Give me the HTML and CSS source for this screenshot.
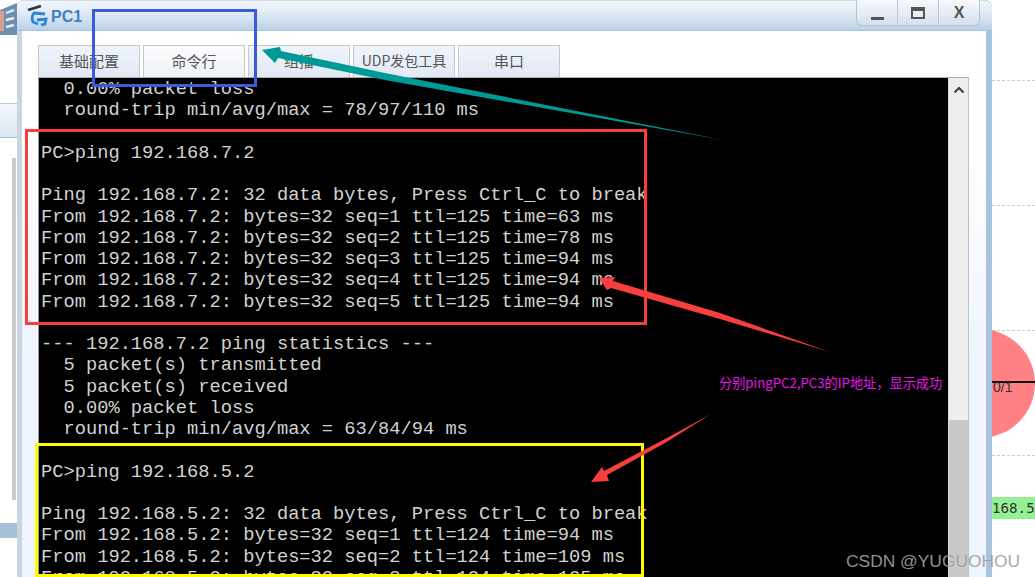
FILE: index.html
```html
<!DOCTYPE html>
<html lang="zh-CN">
<head>
<meta charset="utf-8">
<title>PC1</title>
<link rel="stylesheet" href="styles.css">
</head>
<body>
<div class="stage">
  <aside class="side-left">
    <div class="left-top">
      <svg class="left-icon" viewBox="0 0 17 33"><path d="M0 8 L17 1 V33 L0 33Z" fill="#6f8fb0"/><path d="M0 9h4v20H0z" fill="#d9a08e"/><path d="M6 11l8-3M6 18l8-2M6 25l8-2" stroke="#e8eef5" stroke-width="2.4"/></svg>
    </div>
    <div class="left-head"></div>
    <div class="left-body"><div class="left-scroll"></div></div>
    <div class="left-bar"></div>
  </aside>

  <main class="window">
    <header class="titlebar">
      <svg class="app-icon" viewBox="0 0 22 24"><path d="M1 6 L14 2" stroke="#333" stroke-width="2.8" fill="none"/><path d="M18 10 L7 9 Q4 13 6 18 L11 20" stroke="#2a86d8" stroke-width="2.800" fill="none"/><path d="M10 16 L19 15 L18 20 L14 21" stroke="#2a86d8" stroke-width="2.800" fill="none"/></svg>
      <span class="title-text">PC1</span>
      <div class="controls">
        <div class="ctl"><span class="ctl-min"></span></div>
        <div class="ctl"><span class="ctl-max"></span></div>
        <div class="ctl ctl-x">X</div>
      </div>
    </header>
    <section class="content">
      <nav class="tabs">
        <div class="tab">基础配置</div>
        <div class="tab tab-active">命令行</div>
        <div class="tab">组播</div>
        <div class="tab tab-udp">UDP发包工具</div>
        <div class="tab">串口</div>
      </nav>
      <div class="console">
<pre class="terminal">  0.00% packet loss
  round-trip min/avg/max = 78/97/110 ms

PC&gt;ping 192.168.7.2

Ping 192.168.7.2: 32 data bytes, Press Ctrl_C to break
From 192.168.7.2: bytes=32 seq=1 ttl=125 time=63 ms
From 192.168.7.2: bytes=32 seq=2 ttl=125 time=78 ms
From 192.168.7.2: bytes=32 seq=3 ttl=125 time=94 ms
From 192.168.7.2: bytes=32 seq=4 ttl=125 time=94 ms
From 192.168.7.2: bytes=32 seq=5 ttl=125 time=94 ms

--- 192.168.7.2 ping statistics ---
  5 packet(s) transmitted
  5 packet(s) received
  0.00% packet loss
  round-trip min/avg/max = 63/84/94 ms

PC&gt;ping 192.168.5.2

Ping 192.168.5.2: 32 data bytes, Press Ctrl_C to break
From 192.168.5.2: bytes=32 seq=1 ttl=124 time=94 ms
From 192.168.5.2: bytes=32 seq=2 ttl=124 time=109 ms
From 192.168.5.2: bytes=32 seq=3 ttl=124 time=125 ms</pre>
        <div class="scrollbar">
          <svg class="scroll-up" viewBox="0 0 12 8"><path d="M1.5 6.5 L6 2 L10.500 6.500" stroke="#444" stroke-width="2.200" fill="none"/></svg>
          <div class="scroll-thumb"></div>
        </div>
      </div>
    </section>
  </main>

  <aside class="side-right">
    <div class="guide guide-1"></div>
    <div class="guide guide-2"></div>
    <div class="guide guide-3"></div>
    <div class="guide guide-4"></div>
    <div class="node"></div>
    <div class="link"></div>
    <div class="port">0/1</div>
    <div class="ip-label">168.5</div>
  </aside>

  <div class="mark mark-blue"></div>
  <div class="mark mark-red"></div>
  <div class="mark mark-yellow"></div>
  <svg class="arrows" viewBox="0 0 1035 577">
    <polygon fill="#009a96" points="262,50 280,47 281,51 385,73 723,140 385,80 278,58 275,63"/>
    <polygon fill="#f93e3e" points="599,278 615,277 613,281 720,313 830,352 720,319 611,288 607,290"/>
    <polygon fill="#f93e3e" points="591,482 602,467 604,471 665,439 711,414 665,443 607,475 609,481"/>
  </svg>
  <div class="note">分别pingPC2,PC3的IP地址，显示成功</div>
  <div class="watermark">CSDN @YUGUOHOU</div>
</div>
</body>
</html>
```
FILE: styles.css
```css
* { box-sizing: border-box; }
html, body { margin: 0; padding: 0; background: #fff; }
body { width: 1035px; height: 577px; overflow: hidden; }
.stage {
  position: relative;
  display: flex;
  width: 1035px;
  height: 577px;
  overflow: hidden;
  background: #fff;
}

/* left background app */
.side-left { width: 17px; height: 577px; display: flex; flex-direction: column; flex: none; }
.left-top { height: 103px; background: #fff; }
.left-icon { display: block; width: 17px; height: 33px; margin-top: 2px; }
.left-head {
  height: 35px;
  border-top: 1px solid #c4ccd6;
  border-bottom: 1px solid #a9c0d6;
  background: linear-gradient(#f4f7fb, #dbe6f1);
}
.left-body { height: 385px; padding: 20px 0 23px 12px; background: #fff; }
.left-scroll { width: 4px; height: 100%; background: #c9c9c9; }
.left-bar { height: 15px; background: #a6c0da; }

/* simulator window */
.window {
  width: 975px;
  height: 577px;
  flex: none;
  display: flex;
  flex-direction: column;
  border-radius: 7px 7px 0 0;
  background: linear-gradient(90deg, #c9d6e2 0, #9dbcd7 40%, #a8c4dd 100%);
  padding: 0 6px 0 5px;
}
.titlebar {
  height: 31px;
  flex: none;
  margin: 0 -6px 0 -5px;
  padding-left: 10px;
  display: flex;
  align-items: center;
  border-top: 1px solid #d6dbe2;
  border-radius: 7px 7px 0 0;
  border-bottom: 1px solid #a9c3da;
  background: linear-gradient(#f1f5fb, #e6edf7 35%, #b9d1e8);
}
.app-icon { width: 22px; height: 24px; flex: none; }
.title-text {
  margin-left: 2px;
  padding-top: 2px;
  font: 700 16px "Liberation Sans", sans-serif;
  color: #3f7fbe;
}
.controls {
  margin-left: auto;
  margin-right: 12px;
  margin-top: -5px;
  width: 124px;
  height: 26px;
  display: flex;
  border: 1px solid #b9c4cf;
  border-top: none;
  border-radius: 0 0 6px 6px;
  background: linear-gradient(#f7f9fc, #d5e1ee);
}
.ctl {
  flex: 1;
  display: flex;
  align-items: center;
  justify-content: center;
  border-right: 1px solid #bcc8d4;
  font: 700 16px "Liberation Sans", sans-serif;
  color: #555;
}
.ctl:last-child { border-right: none; }
.ctl-min { width: 13px; height: 3px; background: #555; margin-top: 12px; }
.ctl-max { width: 14px; height: 12px; border: 2px solid #555; border-top-width: 4px; background: #e8eef6; }

.content {
  flex: 1;
  min-height: 0;
  padding: 14px 17px 0 16px;
  display: flex;
  flex-direction: column;
  background: linear-gradient(#fff, #fff 20%, #eff4fe 60%);
}
.tabs { display: flex; gap: 3px; height: 32px; flex: none; }
.tab {
  width: 102px;
  display: flex;
  align-items: center;
  justify-content: center;
  padding-bottom: 3px;
  border: 1px solid #c3c8ce;
  border-bottom: none;
  background: linear-gradient(#f0f4fb, #e1e9f5);
  font: 15px "Noto Sans CJK SC", sans-serif;
  color: #555;
}
.tab-active { background: linear-gradient(#fbfcfe, #eef1f6); }
.tab-udp { white-space: nowrap; font-size: 14px; }

.console {
  flex: 1;
  min-height: 0;
  display: flex;
  border-top: 1px solid #aaa;
  border-right: 1px solid #c0c0c0;
  border-left: 1px solid #999;
}
.terminal {
  flex: 1;
  margin: 0;
  padding: 1px 0 0 2px;
  background: #000;
  color: #d2d2d2;
  font: 18.73px/21.25px "Liberation Mono", monospace;
  overflow: hidden;
  white-space: pre;
}
.scrollbar {
  position: relative;
  width: 20px;
  flex: none;
  background: #eee;
  display: flex;
  flex-direction: column;
  justify-content: flex-end;
  border-left: 1px solid #ddd;
}
.scroll-up { position: absolute; top: 8px; left: 4px; width: 12px; height: 8px; }
.scroll-thumb { height: 157px; background: #c8c8c8; }

/* right background diagram: free canvas */
.side-right { position: relative; flex: 1; height: 577px; background: #fff; overflow: hidden; }
.guide { position: absolute; left: 0; right: 0; border-top: 1px dashed #ccc; }
.guide-1 { top: 80px; }
.guide-2 { top: 205px; }
.guide-3 { top: 330px; }
.guide-4 { top: 455px; }
.node {
  position: absolute;
  left: -67px;
  top: 329px;
  width: 110px;
  height: 109px;
  border-radius: 50%;
  background: #ff8184;
}
.link { position: absolute; left: 0; right: 0; top: 381px; height: 2px; background: #111; }
.port {
  position: absolute;
  left: 1px;
  top: 379px;
  font: 14px "Liberation Sans", sans-serif;
  color: #333;
}
.ip-label {
  position: absolute;
  left: 0;
  right: 0;
  top: 497px;
  height: 22px;
  padding-top: 1px;
  background: #94f094;
  font: 14.2px/20px "DejaVu Sans Mono", monospace;
  color: #333;
}

/* annotations drawn over the screenshot */
.mark { position: absolute; border-style: solid; border-width: 3px; }
.mark-blue { left: 92px; top: 9px; width: 165px; height: 78px; border-color: #3c5bdc; }
.mark-red { left: 25px; top: 129px; width: 622px; height: 196px; border-color: #f93e3e; }
.mark-yellow { left: 35px; top: 443px; width: 609px; height: 134px; border-color: #ffff00; }
.arrows { position: absolute; left: 0; top: 0; width: 1035px; height: 577px; pointer-events: none; }
.note {
  position: absolute;
  left: 719px;
  top: 374px;
  font: 13.2px/18px "Noto Sans CJK SC", sans-serif;
  color: #e815e8;
  white-space: nowrap;
}
.watermark {
  position: absolute;
  left: 846px;
  top: 550px;
  font: 17.4px/22px "Liberation Sans", sans-serif;
  color: rgba(160, 160, 160, .92);
  white-space: nowrap;
}
```
